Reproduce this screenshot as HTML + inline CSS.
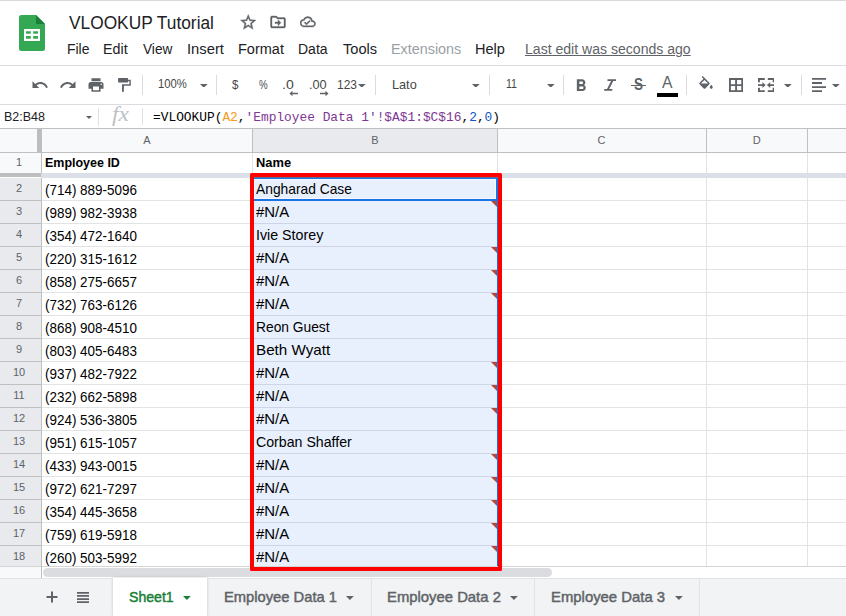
<!DOCTYPE html>
<html><head><meta charset="utf-8"><title>VLOOKUP Tutorial</title>
<style>
html,body{margin:0;padding:0;}
body{width:846px;height:616px;overflow:hidden;background:#fff;position:relative;font-family:"Liberation Sans",sans-serif;color:#000;}
.a{position:absolute;}
.t{position:absolute;white-space:nowrap;line-height:1;}
.hl{position:absolute;height:1px;background:#e2e3e3;left:42px;width:804px;}
.vl{position:absolute;width:1px;background:#e2e3e3;top:153px;height:414px;}
.rn{position:absolute;left:0;width:38px;text-align:center;font-size:11px;color:#5f6368;line-height:1;}
.ch{position:absolute;font-size:11px;color:#5f6368;line-height:1;text-align:center;}
.tri{position:absolute;width:0;height:0;border-top:6px solid #b5483a;border-left:6px solid transparent;left:491px;}
.dd{position:absolute;width:0;height:0;border-left:4px solid transparent;border-right:4px solid transparent;border-top:4px solid #5f6368;}
</style></head><body>

<div class="a" style="left:0;top:0;width:846px;height:1px;background:#d9d9d9"></div>
<svg class="a" style="left:19px;top:15px" width="26" height="36" viewBox="0 0 26 36">
<path d="M2.500 0H17l9 9v24.500a2.500 2.500 0 0 1-2.500 2.500h-21A2.500 2.500 0 0 1 0 33.500V2.500A2.500 2.500 0 0 1 2.500 0z" fill="#34a853"/>
<path d="M17 0l9 9h-9z" fill="#188038"/>
<path d="M5 14h16v12H5zM7 16.200v2.600h4.800v-2.600zM14.200 16.200v2.600H19v-2.600zM7 21.100v2.700h4.800v-2.700zM14.200 21.100v2.700H19v-2.700z" fill="#fff" fill-rule="evenodd"/>
</svg>
<div class="t" style="left:68.50px;top:15.49px;font-size:17.5px;color:#202124;font-family:'Liberation Sans',sans-serif;transform:scaleX(0.9891);transform-origin:0 0;">VLOOKUP Tutorial</div>
<svg class="a" style="left:238.700px;top:12.800px" width="18.500" height="18.500" viewBox="0 0 24 24"><path stroke="#5f6368" stroke-width="0.500" d="M22 9.240l-7.190-.620L12 2 9.190 8.630 2 9.240l5.460 4.730L5.820 21 12 17.270 18.180 21l-1.630-7.030L22 9.240zM12 15.400l-3.760 2.270 1-4.280-3.320-2.880 4.380-.380L12 6.100l1.710 4.040 4.380.380-3.320 2.880 1 4.280L12 15.400z" fill="#5f6368"/></svg>
<svg class="a" style="left:268.500px;top:13px" width="18" height="18" viewBox="0 0 24 24"><path stroke="#5f6368" stroke-width="0.500" d="M20 6h-8l-2-2H4c-1.100 0-2 .900-2 2v12c0 1.100.900 2 2 2h16c1.100 0 2-.900 2-2V8c0-1.100-.900-2-2-2zm0 12H4V6h5.170l2 2H20v10zm-8-1l4-4-4-4v3H8v2h4v3z" fill="#5f6368"/></svg>
<svg class="a" style="left:300.200px;top:14.300px" width="15.600" height="15.600" viewBox="0 0 24 24"><path stroke="#5f6368" stroke-width="0.600" d="M19.350 10.040A7.490 7.490 0 0 0 12 4C9.110 4 6.600 5.640 5.350 8.040A5.994 5.994 0 0 0 0 14c0 3.310 2.690 6 6 6h13c2.760 0 5-2.240 5-5 0-2.640-2.050-4.780-4.650-4.960zM19 18H6c-2.210 0-4-1.790-4-4s1.790-4 4-4h.710C7.370 7.690 9.480 6 12 6c3.040 0 5.500 2.460 5.500 5.500v.500H19c1.660 0 3 1.340 3 3s-1.340 3-3 3zm-9-3.820l-2.090-2.090L6.500 13.500 10 17l6.010-6.010-1.410-1.410z" fill="#5f6368"/></svg>
<div class="t" style="left:66.80px;top:42.15px;font-size:14px;color:#202124;font-family:'Liberation Sans',sans-serif;transform:scaleX(0.9967);transform-origin:0 0;">File</div>
<div class="t" style="left:103.28px;top:42.15px;font-size:14px;color:#202124;font-family:'Liberation Sans',sans-serif;transform:scaleX(1.0200);transform-origin:0 0;">Edit</div>
<div class="t" style="left:142.50px;top:42.15px;font-size:14px;color:#202124;font-family:'Liberation Sans',sans-serif;transform:scaleX(0.9748);transform-origin:0 0;">View</div>
<div class="t" style="left:186.75px;top:42.15px;font-size:14px;color:#202124;font-family:'Liberation Sans',sans-serif;transform:scaleX(1.0550);transform-origin:0 0;">Insert</div>
<div class="t" style="left:237.86px;top:42.15px;font-size:14px;color:#202124;font-family:'Liberation Sans',sans-serif;transform:scaleX(1.0357);transform-origin:0 0;">Format</div>
<div class="t" style="left:298.00px;top:42.15px;font-size:14px;color:#202124;font-family:'Liberation Sans',sans-serif;transform:scaleX(1.0005);transform-origin:0 0;">Data</div>
<div class="t" style="left:342.90px;top:42.15px;font-size:14px;color:#202124;font-family:'Liberation Sans',sans-serif;transform:scaleX(1.0434);transform-origin:0 0;">Tools</div>
<div class="t" style="left:391.07px;top:42.15px;font-size:14px;color:#9aa0a6;font-family:'Liberation Sans',sans-serif;transform:scaleX(1.0255);transform-origin:0 0;">Extensions</div>
<div class="t" style="left:474.66px;top:42.15px;font-size:14px;color:#202124;font-family:'Liberation Sans',sans-serif;transform:scaleX(1.0390);transform-origin:0 0;">Help</div>
<div class="t" style="left:525.40px;top:42.15px;font-size:14px;color:#5f6368;font-family:'Liberation Sans',sans-serif;transform:scaleX(1.0042);transform-origin:0 0;text-decoration:underline;">Last edit was seconds ago</div>
<div class="a" style="left:0;top:65px;width:846px;height:1px;background:#dadce0"></div>
<div class="a" style="left:0;top:104px;width:846px;height:1px;background:#dadce0"></div>
<svg class="a" style="left:31px;top:76px" width="18" height="18" viewBox="0 0 24 24"><path d="M12.500 8c-2.650 0-5.050.990-6.900 2.600L2 7v9h9l-3.620-3.620c1.390-1.160 3.160-1.880 5.120-1.880 3.540 0 6.550 2.310 7.600 5.500l2.370-.780C21.080 11.030 17.150 8 12.500 8z" fill="#5f6368"/></svg>
<svg class="a" style="left:59px;top:76px" width="18" height="18" viewBox="0 0 24 24"><path d="M18.400 10.600C16.550 8.990 14.150 8 11.500 8c-4.650 0-8.580 3.030-9.960 7.220L3.900 16c1.050-3.190 4.050-5.500 7.600-5.500 1.950 0 3.730.720 5.120 1.880L13 16h9V7l-3.600 3.600z" fill="#5f6368"/></svg>
<svg class="a" style="left:87px;top:76px" width="18" height="18" viewBox="0 0 24 24"><path d="M19 8H5c-1.660 0-3 1.340-3 3v6h4v4h12v-4h4v-6c0-1.660-1.340-3-3-3zm-3 11H8v-5h8v5zm3-7c-.550 0-1-.450-1-1s.450-1 1-1 1 .450 1 1-.450 1-1 1zm-1-9H6v4h12V3z" fill="#5f6368"/></svg>
<svg class="a" style="left:112px;top:72px" width="28" height="26" viewBox="0 0 28 26"><rect x="6.100" y="6.100" width="9.900" height="4.500" rx="0.600" fill="#5f6368"/><path d="M16 7.800H18.800V13.700H11.900V19.800H10V12.200H17.400V9.300H16Z" fill="#5f6368"/></svg>
<div class="a" style="left:142px;top:75px;width:1px;height:20px;background:#dadce0"></div>
<div class="t" style="left:158.30px;top:76.70px;font-size:13px;color:#444746;font-family:'Liberation Sans',sans-serif;transform:scaleX(0.8667);transform-origin:0 0;">100%</div>
<svg class="a" style="left:200.2px;top:83.6px" width="7.600" height="3.800" viewBox="0 0 7.600 3.800"><path d="M0 0h7.600L3.800 3.800z" fill="#5f6368"/></svg>
<div class="a" style="left:216px;top:75px;width:1px;height:20px;background:#dadce0"></div>
<div class="t" style="left:231.50px;top:77.70px;font-size:13px;color:#444746;font-family:'Liberation Sans',sans-serif;transform:scaleX(0.8875);transform-origin:0 0;">$</div>
<div class="t" style="left:258.50px;top:77.70px;font-size:13px;color:#444746;font-family:'Liberation Sans',sans-serif;transform:scaleX(0.7500);transform-origin:0 0;">%</div>
<div class="t" style="left:281.52px;top:77.70px;font-size:13px;color:#444746;font-family:'Liberation Sans',sans-serif;transform:scaleX(1.0820);transform-origin:0 0;">.0</div>
<div class="t" style="left:308.52px;top:77.70px;font-size:13px;color:#444746;font-family:'Liberation Sans',sans-serif;transform:scaleX(0.9797);transform-origin:0 0;">.00</div>
<svg class="a" style="left:289px;top:90px" width="10" height="7" viewBox="0 0 10 7"><path d="M0.500 3.500L3.500 0.700v2h5.500v1.600H3.500v2z" fill="#5f6368"/></svg>
<svg class="a" style="left:319px;top:90px" width="10" height="7" viewBox="0 0 10 7"><path d="M9.500 3.500L6.500 0.700v2H1v1.600h5.500v2z" fill="#5f6368"/></svg>
<div class="t" style="left:336.50px;top:77.70px;font-size:13px;color:#444746;font-family:'Liberation Sans',sans-serif;transform:scaleX(0.9226);transform-origin:0 0;">123</div>
<svg class="a" style="left:358.2px;top:83.6px" width="7.600" height="3.800" viewBox="0 0 7.600 3.800"><path d="M0 0h7.600L3.800 3.800z" fill="#5f6368"/></svg>
<div class="a" style="left:375px;top:75px;width:1px;height:20px;background:#dadce0"></div>
<div class="t" style="left:391.62px;top:77.70px;font-size:13px;color:#444746;font-family:'Liberation Sans',sans-serif;transform:scaleX(0.9762);transform-origin:0 0;">Lato</div>
<svg class="a" style="left:472.2px;top:83.6px" width="7.600" height="3.800" viewBox="0 0 7.600 3.800"><path d="M0 0h7.600L3.800 3.800z" fill="#5f6368"/></svg>
<div class="a" style="left:489px;top:75px;width:1px;height:20px;background:#dadce0"></div>
<div class="t" style="left:506.00px;top:76.70px;font-size:13px;color:#444746;font-family:'Liberation Sans',sans-serif;transform:scaleX(0.8142);transform-origin:0 0;">11</div>
<svg class="a" style="left:547.2px;top:83.6px" width="7.600" height="3.800" viewBox="0 0 7.600 3.800"><path d="M0 0h7.600L3.800 3.800z" fill="#5f6368"/></svg>
<div class="a" style="left:563px;top:75px;width:1px;height:20px;background:#dadce0"></div>
<svg class="a" style="left:570.9px;top:75.9px" width="20" height="20" viewBox="0 0 24 24"><path d="M15.600 10.790c.970-.670 1.650-1.770 1.650-2.790 0-2.260-1.750-4-4-4H7v14h7.040c2.090 0 3.710-1.700 3.710-3.790 0-1.520-.860-2.820-2.150-3.420zM10 6.500h3c.830 0 1.500.670 1.500 1.500s-.670 1.500-1.500 1.500h-3v-3zm3.500 9H10v-3h3.500c.830 0 1.500.670 1.500 1.500s-.670 1.500-1.500 1.500z" fill="#5f6368"/></svg>
<svg class="a" style="left:600px;top:76px" width="20" height="18" viewBox="0 0 20 18"><path d="M7.500 3.200H16v1.800H13.300L9.200 13H12.300v1.800H4.200V13H7L11.100 5H7.500z" fill="#5f6368"/></svg>
<div class="t" style="left:633.70px;top:77.46px;font-size:16px;color:#5f6368;font-family:'Liberation Sans',sans-serif;font-weight:bold;transform:scaleX(0.8455);transform-origin:0 0;">S</div>
<div class="a" style="left:631px;top:84.500px;width:14.500px;height:1.700px;background:#5f6368"></div>
<div class="t" style="left:661.70px;top:75.26px;font-size:16px;color:#5f6368;font-family:'Liberation Sans',sans-serif;transform:scaleX(0.9818);transform-origin:0 0;">A</div>
<div class="a" style="left:657px;top:93px;width:21px;height:4px;background:#000"></div>
<div class="a" style="left:686px;top:75px;width:1px;height:20px;background:#dadce0"></div>
<svg class="a" style="left:697px;top:76px" width="18" height="18" viewBox="0 0 24 24"><path d="M16.560 8.940L7.620 0 6.210 1.410l2.380 2.380-5.150 5.150c-.590.590-.590 1.540 0 2.120l5.500 5.500c.290.290.680.440 1.060.440s.770-.150 1.060-.440l5.500-5.500c.590-.580.590-1.530 0-2.120zM5.210 10L10 5.210 14.790 10H5.210zM19 11.500s-2 2.170-2 3.500c0 1.100.900 2 2 2s2-.900 2-2c0-1.330-2-3.500-2-3.500z" fill="#5f6368"/></svg>
<svg class="a" style="left:729px;top:77.700px" width="14.200" height="14.200" viewBox="0 0 14.200 14.200"><path d="M0 0h14.200v14.200H0zM1.900 1.900v4.250h4.250V1.900zM8.050 1.900v4.250h4.250V1.900zM1.900 8.050v4.250h4.250V8.050zM8.050 8.050v4.250h4.250V8.050z" fill="#5f6368" fill-rule="evenodd"/></svg>
<svg class="a" style="left:757.900px;top:77.700px" width="16.600" height="14.100" viewBox="0 0 16.600 14.100"><g fill="#5f6368"><path d="M0 0h6.800v1.900H1.900v2.400H0zM16.600 0h-6.800v1.900h4.900v2.400h1.900zM0 14.100h6.800v-1.900H1.900V9.800H0zM16.600 14.100h-6.800v-1.900h4.900V9.800h1.900zM0 6.150h4.400V4.200L7.700 7.050 4.400 9.900V7.950H0zM16.600 6.150h-4.400V4.200L8.900 7.050l3.300 2.850V7.950h4.400z"/></g></svg>
<svg class="a" style="left:784.2px;top:83.6px" width="7.600" height="3.800" viewBox="0 0 7.600 3.800"><path d="M0 0h7.600L3.800 3.800z" fill="#5f6368"/></svg>
<div class="a" style="left:801px;top:75px;width:1px;height:20px;background:#dadce0"></div>
<svg class="a" style="left:811px;top:78px" width="16" height="14" viewBox="0 0 16 14"><path d="M1 0h14v1.800H1zM1 4.100h10v1.800H1zM1 8.300h14v1.800H1zM1 12.300h10v1.800H1z" fill="#5f6368"/></svg>
<svg class="a" style="left:832.2px;top:83.6px" width="7.600" height="3.800" viewBox="0 0 7.600 3.800"><path d="M0 0h7.600L3.800 3.800z" fill="#5f6368"/></svg>
<div class="a" style="left:0;top:128px;width:846px;height:1px;background:#c0c0c0"></div>
<div class="t" style="left:3.50px;top:111.42px;font-size:12.5px;color:#202124;font-family:'Liberation Sans',sans-serif;transform:scaleX(0.9987);transform-origin:0 0;">B2:B48</div>
<div class="dd" style="left:86px;top:116px;border-left-width:3px;border-right-width:3px;border-top-width:3px"></div>
<div class="a" style="left:98px;top:108px;width:1px;height:18px;background:#dde2ea"></div>
<div class="t" style="left:111.50px;top:104.45px;font-size:20px;color:#bdc1c6;font-family:'Liberation Serif',serif;font-style:italic;transform:scaleX(1.1679);transform-origin:0 0;">fx</div>
<div class="a" style="left:142px;top:108px;width:1px;height:17px;background:#dde2ea"></div>
<div class="t" style="left:152.80px;top:111.04px;font-size:13px;color:#000;font-family:'Liberation Mono',monospace;transform:scaleX(0.9884);transform-origin:0 0;">=VLOOKUP(<span style="color:#f7981d">A2</span>,<span style="color:#7e3794">'Employee Data 1'!$A$1:$C$16</span>,<span style="color:#1155cc">2</span>,<span style="color:#1155cc">0</span>)</div>
<div class="a" style="left:0;top:129px;width:846px;height:23px;background:#f8f9fa"></div>
<div class="a" style="left:253px;top:129px;width:244px;height:23px;background:#e8eaed"></div>
<div class="a" style="left:0;top:152px;width:846px;height:1px;background:#c0c0c0"></div>
<div class="a" style="left:41px;top:129px;width:1px;height:23px;background:#c0c0c0"></div>
<div class="a" style="left:252px;top:129px;width:1px;height:23px;background:#c0c0c0"></div>
<div class="a" style="left:497px;top:129px;width:1px;height:23px;background:#c0c0c0"></div>
<div class="a" style="left:706px;top:129px;width:1px;height:23px;background:#c0c0c0"></div>
<div class="a" style="left:807px;top:129px;width:1px;height:23px;background:#c0c0c0"></div>
<div class="ch" style="left:41.5px;width:211.0px;top:134.700px">A</div>
<div class="ch" style="left:252.3px;width:245.0px;top:134.700px">B</div>
<div class="ch" style="left:497px;width:209px;top:134.700px">C</div>
<div class="ch" style="left:706.2px;width:101.0px;top:134.700px">D</div>
<div class="a" style="left:37px;top:129px;width:4px;height:23px;background:#bdbdbd"></div>
<div class="a" style="left:0;top:153px;width:41px;height:20px;background:#f8f9fa"></div>
<div class="a" style="left:0;top:178px;width:41px;height:389px;background:#e8eaed"></div>
<div class="a" style="left:41px;top:153px;width:1px;height:425px;background:#c0c0c0"></div>
<div class="rn" style="top:156.700px">1</div>
<div class="t" style="left:45.40px;top:155.50px;font-size:13px;color:#000;font-family:'Liberation Sans',sans-serif;font-weight:bold;transform:scaleX(0.9596);transform-origin:0 0;">Employee ID</div>
<div class="t" style="left:255.70px;top:155.50px;font-size:13px;color:#000;font-family:'Liberation Sans',sans-serif;font-weight:bold;transform:scaleX(0.9893);transform-origin:0 0;">Name</div>
<div class="a" style="left:253px;top:178px;width:245px;height:389px;background:#e8f0fe"></div>
<div class="vl" style="left:252px"></div>
<div class="vl" style="left:497px"></div>
<div class="vl" style="left:706px"></div>
<div class="vl" style="left:807px"></div>
<div class="hl" style="top:200px"></div>
<div class="a" style="left:253px;top:200px;width:244px;height:1px;background:#ced6e6"></div>
<div class="a" style="left:0;top:200px;width:41px;height:1px;background:#c0c0c0"></div>
<div class="rn" style="top:182.7px">2</div>
<div class="t" style="left:45.40px;top:182.73px;font-size:14.5px;color:#000;font-family:'Liberation Sans',sans-serif;transform:scaleX(0.9264);transform-origin:0 0;">(714) 889-5096</div>
<div class="t" style="left:256.40px;top:181.73px;font-size:14.5px;color:#000;font-family:'Liberation Sans',sans-serif;transform:scaleX(0.9523);transform-origin:0 0;">Angharad Case</div>
<div class="hl" style="top:223px"></div>
<div class="a" style="left:253px;top:223px;width:244px;height:1px;background:#ced6e6"></div>
<div class="a" style="left:0;top:223px;width:41px;height:1px;background:#c0c0c0"></div>
<div class="rn" style="top:205.7px">3</div>
<div class="t" style="left:45.40px;top:205.73px;font-size:14.5px;color:#000;font-family:'Liberation Sans',sans-serif;transform:scaleX(0.9264);transform-origin:0 0;">(989) 982-3938</div>
<div class="t" style="left:256.40px;top:204.73px;font-size:14.5px;color:#000;font-family:'Liberation Sans',sans-serif;transform:scaleX(1.0287);transform-origin:0 0;">#N/A</div>
<div class="tri" style="top:201px"></div>
<div class="hl" style="top:246px"></div>
<div class="a" style="left:253px;top:246px;width:244px;height:1px;background:#ced6e6"></div>
<div class="a" style="left:0;top:246px;width:41px;height:1px;background:#c0c0c0"></div>
<div class="rn" style="top:228.7px">4</div>
<div class="t" style="left:45.40px;top:228.73px;font-size:14.5px;color:#000;font-family:'Liberation Sans',sans-serif;transform:scaleX(0.9264);transform-origin:0 0;">(354) 472-1640</div>
<div class="t" style="left:255.92px;top:227.73px;font-size:14.5px;color:#000;font-family:'Liberation Sans',sans-serif;transform:scaleX(0.9817);transform-origin:0 0;">Ivie Storey</div>
<div class="hl" style="top:269px"></div>
<div class="a" style="left:253px;top:269px;width:244px;height:1px;background:#ced6e6"></div>
<div class="a" style="left:0;top:269px;width:41px;height:1px;background:#c0c0c0"></div>
<div class="rn" style="top:251.7px">5</div>
<div class="t" style="left:45.40px;top:251.73px;font-size:14.5px;color:#000;font-family:'Liberation Sans',sans-serif;transform:scaleX(0.9264);transform-origin:0 0;">(220) 315-1612</div>
<div class="t" style="left:256.40px;top:250.73px;font-size:14.5px;color:#000;font-family:'Liberation Sans',sans-serif;transform:scaleX(1.0287);transform-origin:0 0;">#N/A</div>
<div class="tri" style="top:247px"></div>
<div class="hl" style="top:292px"></div>
<div class="a" style="left:253px;top:292px;width:244px;height:1px;background:#ced6e6"></div>
<div class="a" style="left:0;top:292px;width:41px;height:1px;background:#c0c0c0"></div>
<div class="rn" style="top:274.7px">6</div>
<div class="t" style="left:45.40px;top:274.73px;font-size:14.5px;color:#000;font-family:'Liberation Sans',sans-serif;transform:scaleX(0.9264);transform-origin:0 0;">(858) 275-6657</div>
<div class="t" style="left:256.40px;top:273.73px;font-size:14.5px;color:#000;font-family:'Liberation Sans',sans-serif;transform:scaleX(1.0287);transform-origin:0 0;">#N/A</div>
<div class="tri" style="top:270px"></div>
<div class="hl" style="top:315px"></div>
<div class="a" style="left:253px;top:315px;width:244px;height:1px;background:#ced6e6"></div>
<div class="a" style="left:0;top:315px;width:41px;height:1px;background:#c0c0c0"></div>
<div class="rn" style="top:297.7px">7</div>
<div class="t" style="left:45.40px;top:297.73px;font-size:14.5px;color:#000;font-family:'Liberation Sans',sans-serif;transform:scaleX(0.9264);transform-origin:0 0;">(732) 763-6126</div>
<div class="t" style="left:256.40px;top:296.73px;font-size:14.5px;color:#000;font-family:'Liberation Sans',sans-serif;transform:scaleX(1.0287);transform-origin:0 0;">#N/A</div>
<div class="tri" style="top:293px"></div>
<div class="hl" style="top:338px"></div>
<div class="a" style="left:253px;top:338px;width:244px;height:1px;background:#ced6e6"></div>
<div class="a" style="left:0;top:338px;width:41px;height:1px;background:#c0c0c0"></div>
<div class="rn" style="top:320.7px">8</div>
<div class="t" style="left:45.40px;top:320.73px;font-size:14.5px;color:#000;font-family:'Liberation Sans',sans-serif;transform:scaleX(0.9264);transform-origin:0 0;">(868) 908-4510</div>
<div class="t" style="left:256.15px;top:319.73px;font-size:14.5px;color:#000;font-family:'Liberation Sans',sans-serif;transform:scaleX(0.9509);transform-origin:0 0;">Reon Guest</div>
<div class="hl" style="top:361px"></div>
<div class="a" style="left:253px;top:361px;width:244px;height:1px;background:#ced6e6"></div>
<div class="a" style="left:0;top:361px;width:41px;height:1px;background:#c0c0c0"></div>
<div class="rn" style="top:343.7px">9</div>
<div class="t" style="left:45.40px;top:343.73px;font-size:14.5px;color:#000;font-family:'Liberation Sans',sans-serif;transform:scaleX(0.9264);transform-origin:0 0;">(803) 405-6483</div>
<div class="t" style="left:255.95px;top:342.73px;font-size:14.5px;color:#000;font-family:'Liberation Sans',sans-serif;transform:scaleX(1.0479);transform-origin:0 0;">Beth Wyatt</div>
<div class="hl" style="top:384px"></div>
<div class="a" style="left:253px;top:384px;width:244px;height:1px;background:#ced6e6"></div>
<div class="a" style="left:0;top:384px;width:41px;height:1px;background:#c0c0c0"></div>
<div class="rn" style="top:366.7px">10</div>
<div class="t" style="left:45.40px;top:366.73px;font-size:14.5px;color:#000;font-family:'Liberation Sans',sans-serif;transform:scaleX(0.9264);transform-origin:0 0;">(937) 482-7922</div>
<div class="t" style="left:256.40px;top:365.73px;font-size:14.5px;color:#000;font-family:'Liberation Sans',sans-serif;transform:scaleX(1.0287);transform-origin:0 0;">#N/A</div>
<div class="tri" style="top:362px"></div>
<div class="hl" style="top:407px"></div>
<div class="a" style="left:253px;top:407px;width:244px;height:1px;background:#ced6e6"></div>
<div class="a" style="left:0;top:407px;width:41px;height:1px;background:#c0c0c0"></div>
<div class="rn" style="top:389.7px">11</div>
<div class="t" style="left:45.40px;top:389.73px;font-size:14.5px;color:#000;font-family:'Liberation Sans',sans-serif;transform:scaleX(0.9264);transform-origin:0 0;">(232) 662-5898</div>
<div class="t" style="left:256.40px;top:388.73px;font-size:14.5px;color:#000;font-family:'Liberation Sans',sans-serif;transform:scaleX(1.0287);transform-origin:0 0;">#N/A</div>
<div class="tri" style="top:385px"></div>
<div class="hl" style="top:430px"></div>
<div class="a" style="left:253px;top:430px;width:244px;height:1px;background:#ced6e6"></div>
<div class="a" style="left:0;top:430px;width:41px;height:1px;background:#c0c0c0"></div>
<div class="rn" style="top:412.7px">12</div>
<div class="t" style="left:45.40px;top:412.73px;font-size:14.5px;color:#000;font-family:'Liberation Sans',sans-serif;transform:scaleX(0.9264);transform-origin:0 0;">(924) 536-3805</div>
<div class="t" style="left:256.40px;top:411.73px;font-size:14.5px;color:#000;font-family:'Liberation Sans',sans-serif;transform:scaleX(1.0287);transform-origin:0 0;">#N/A</div>
<div class="tri" style="top:408px"></div>
<div class="hl" style="top:453px"></div>
<div class="a" style="left:253px;top:453px;width:244px;height:1px;background:#ced6e6"></div>
<div class="a" style="left:0;top:453px;width:41px;height:1px;background:#c0c0c0"></div>
<div class="rn" style="top:435.7px">13</div>
<div class="t" style="left:45.40px;top:435.73px;font-size:14.5px;color:#000;font-family:'Liberation Sans',sans-serif;transform:scaleX(0.9264);transform-origin:0 0;">(951) 615-1057</div>
<div class="t" style="left:256.40px;top:434.73px;font-size:14.5px;color:#000;font-family:'Liberation Sans',sans-serif;transform:scaleX(0.9772);transform-origin:0 0;">Corban Shaffer</div>
<div class="hl" style="top:476px"></div>
<div class="a" style="left:253px;top:476px;width:244px;height:1px;background:#ced6e6"></div>
<div class="a" style="left:0;top:476px;width:41px;height:1px;background:#c0c0c0"></div>
<div class="rn" style="top:458.7px">14</div>
<div class="t" style="left:45.40px;top:458.73px;font-size:14.5px;color:#000;font-family:'Liberation Sans',sans-serif;transform:scaleX(0.9264);transform-origin:0 0;">(433) 943-0015</div>
<div class="t" style="left:256.40px;top:457.73px;font-size:14.5px;color:#000;font-family:'Liberation Sans',sans-serif;transform:scaleX(1.0287);transform-origin:0 0;">#N/A</div>
<div class="tri" style="top:454px"></div>
<div class="hl" style="top:499px"></div>
<div class="a" style="left:253px;top:499px;width:244px;height:1px;background:#ced6e6"></div>
<div class="a" style="left:0;top:499px;width:41px;height:1px;background:#c0c0c0"></div>
<div class="rn" style="top:481.7px">15</div>
<div class="t" style="left:45.40px;top:481.73px;font-size:14.5px;color:#000;font-family:'Liberation Sans',sans-serif;transform:scaleX(0.9264);transform-origin:0 0;">(972) 621-7297</div>
<div class="t" style="left:256.40px;top:480.73px;font-size:14.5px;color:#000;font-family:'Liberation Sans',sans-serif;transform:scaleX(1.0287);transform-origin:0 0;">#N/A</div>
<div class="tri" style="top:477px"></div>
<div class="hl" style="top:522px"></div>
<div class="a" style="left:253px;top:522px;width:244px;height:1px;background:#ced6e6"></div>
<div class="a" style="left:0;top:522px;width:41px;height:1px;background:#c0c0c0"></div>
<div class="rn" style="top:504.7px">16</div>
<div class="t" style="left:45.40px;top:504.73px;font-size:14.5px;color:#000;font-family:'Liberation Sans',sans-serif;transform:scaleX(0.9264);transform-origin:0 0;">(354) 445-3658</div>
<div class="t" style="left:256.40px;top:503.73px;font-size:14.5px;color:#000;font-family:'Liberation Sans',sans-serif;transform:scaleX(1.0287);transform-origin:0 0;">#N/A</div>
<div class="tri" style="top:500px"></div>
<div class="hl" style="top:545px"></div>
<div class="a" style="left:253px;top:545px;width:244px;height:1px;background:#ced6e6"></div>
<div class="a" style="left:0;top:545px;width:41px;height:1px;background:#c0c0c0"></div>
<div class="rn" style="top:527.7px">17</div>
<div class="t" style="left:45.40px;top:527.73px;font-size:14.5px;color:#000;font-family:'Liberation Sans',sans-serif;transform:scaleX(0.9264);transform-origin:0 0;">(759) 619-5918</div>
<div class="t" style="left:256.40px;top:526.73px;font-size:14.5px;color:#000;font-family:'Liberation Sans',sans-serif;transform:scaleX(1.0287);transform-origin:0 0;">#N/A</div>
<div class="tri" style="top:523px"></div>
<div class="rn" style="top:550.7px">18</div>
<div class="t" style="left:45.40px;top:550.73px;font-size:14.5px;color:#000;font-family:'Liberation Sans',sans-serif;transform:scaleX(0.9264);transform-origin:0 0;">(260) 503-5992</div>
<div class="t" style="left:256.40px;top:549.73px;font-size:14.5px;color:#000;font-family:'Liberation Sans',sans-serif;transform:scaleX(1.0287);transform-origin:0 0;">#N/A</div>
<div class="tri" style="top:546px"></div>
<div class="a" style="left:41px;top:173px;width:805px;height:5px;background:#dadfe8"></div>
<div class="a" style="left:0;top:173px;width:41px;height:4px;background:#bdbdbd"></div>
<div class="a" style="left:497px;top:178px;width:1px;height:389px;background:#1a73e8"></div>
<div class="a" style="left:252px;top:177px;width:242px;height:20px;border:2px solid #1a73e8"></div>
<div class="a" style="left:254px;top:179px;width:240px;height:18px;border:1px solid rgba(255,255,255,.65)"></div>
<div class="a" style="left:254px;top:177px;width:244px;height:1px;background:#5f7488"></div>
<div class="a" style="left:0;top:566px;width:846px;height:12px;background:#fff"></div>
<div class="a" style="left:0;top:566px;width:41px;height:12px;background:#f8f9fa"></div>
<div class="a" style="left:0;top:566px;width:846px;height:1px;background:#d5d5d5"></div>
<div class="a" style="left:43px;top:568px;width:509px;height:9px;background:#dadce0;border-radius:4.500px"></div>
<div class="a" style="left:41px;top:566px;width:1px;height:12px;background:#c0c0c0"></div>
<div class="a" style="left:0;top:578px;width:846px;height:38px;background:#f1f3f4"></div>
<div class="a" style="left:0;top:578px;width:846px;height:1px;background:#e3e3e3"></div>
<div class="a" style="left:250px;top:173px;width:244px;height:390px;border:4px solid #ff0000;border-radius:1.500px"></div>
<div class="a" style="left:113px;top:578px;width:94px;height:38px;background:#fff;box-shadow:0 0 3px rgba(60,64,67,.25)"></div>
<svg class="a" style="left:46px;top:591px" width="12" height="12" viewBox="0 0 12 12"><path d="M5 0.500h2v4.500h4.500v2H7v4.500H5V7H0.500V5H5z" fill="#5f6368"/></svg>
<svg class="a" style="left:77px;top:592px" width="12" height="11" viewBox="0 0 12 11"><path d="M0 0h12v1.700H0zM0 3.100h12v1.700H0zM0 6.200h12v1.700H0zM0 9.300h12v1.700H0z" fill="#5f6368"/></svg>
<div class="t" style="left:129.20px;top:589.73px;font-size:14.5px;color:#188038;font-family:'Liberation Sans',sans-serif;transform:scaleX(0.9718);transform-origin:0 0;-webkit-text-stroke:0.45px #188038;">Sheet1</div>
<svg class="a" style="left:183.400px;top:596.100px" width="7.800" height="3.900" viewBox="0 0 7.800 3.900"><path d="M0 0h7.800L3.900 3.900z" fill="#188038"/></svg>
<div class="t" style="left:223.88px;top:589.73px;font-size:14.5px;color:#5f6368;font-family:'Liberation Sans',sans-serif;transform:scaleX(1.0158);transform-origin:0 0;-webkit-text-stroke:0.45px #5f6368;">Employee Data 1</div>
<svg class="a" style="left:346.4px;top:596.100px" width="7.800" height="3.900" viewBox="0 0 7.800 3.900"><path d="M0 0h7.800L3.900 3.900z" fill="#5f6368"/></svg>
<div class="t" style="left:386.78px;top:589.73px;font-size:14.5px;color:#5f6368;font-family:'Liberation Sans',sans-serif;transform:scaleX(1.0239);transform-origin:0 0;-webkit-text-stroke:0.45px #5f6368;">Employee Data 2</div>
<svg class="a" style="left:510.2px;top:596.100px" width="7.800" height="3.900" viewBox="0 0 7.800 3.900"><path d="M0 0h7.800L3.900 3.900z" fill="#5f6368"/></svg>
<div class="t" style="left:551.17px;top:589.73px;font-size:14.5px;color:#5f6368;font-family:'Liberation Sans',sans-serif;transform:scaleX(1.0257);transform-origin:0 0;-webkit-text-stroke:0.45px #5f6368;">Employee Data 3</div>
<svg class="a" style="left:675px;top:596.100px" width="7.800" height="3.900" viewBox="0 0 7.800 3.900"><path d="M0 0h7.800L3.900 3.900z" fill="#5f6368"/></svg>
<div class="a" style="left:371px;top:579px;width:1px;height:37px;background:#e3e3e3"></div>
<div class="a" style="left:534px;top:579px;width:1px;height:37px;background:#e3e3e3"></div>
<div class="a" style="left:699px;top:579px;width:1px;height:37px;background:#e3e3e3"></div>
</body></html>
